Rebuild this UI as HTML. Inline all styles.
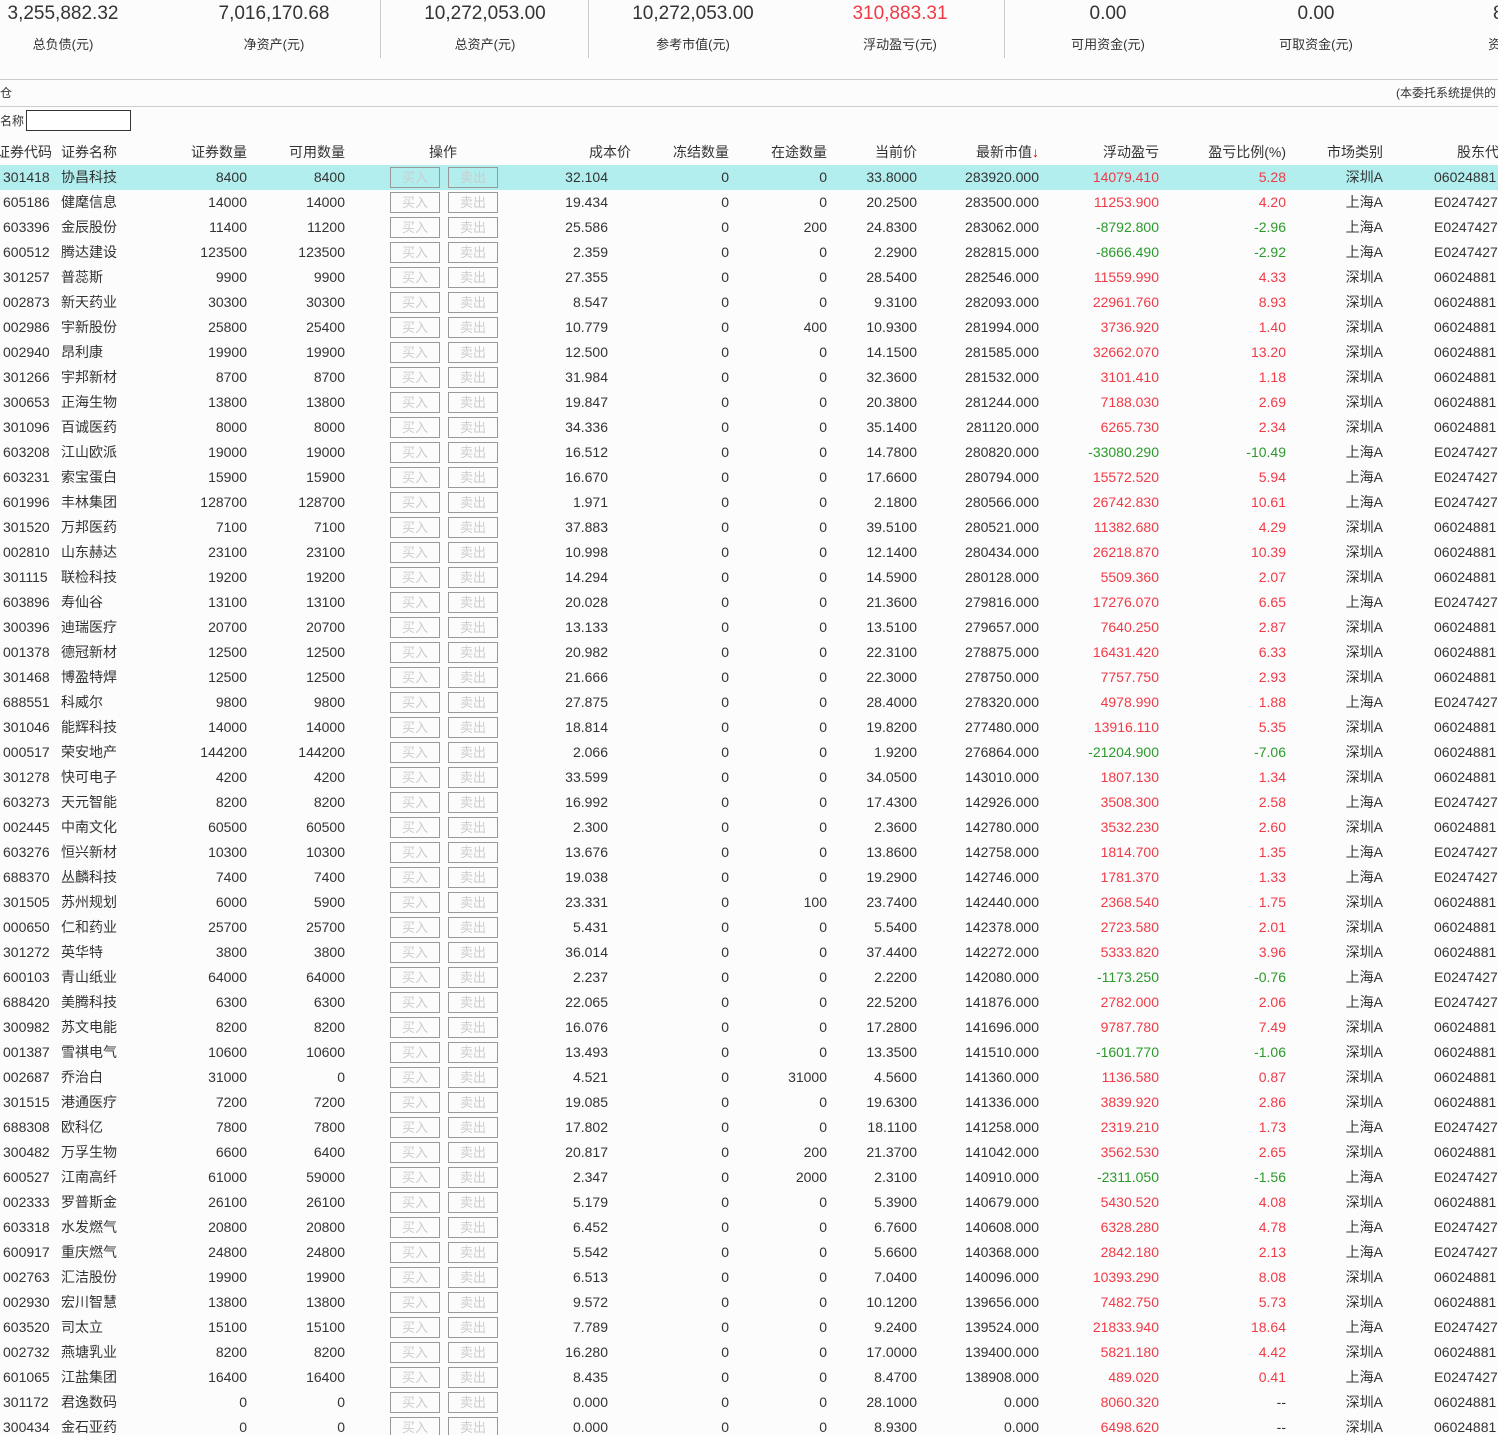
<!DOCTYPE html>
<html><head><meta charset="utf-8">
<style>
html,body{margin:0;padding:0;background:#fcfcfc;width:1498px;height:1435px;overflow:hidden;font-family:"Liberation Sans","Noto Sans CJK SC",sans-serif;color:#333;}
.top{position:absolute;left:0;top:0;width:1498px;height:80px;}
.st{position:absolute;top:0;width:200px;margin-left:-100px;text-align:center;}
.st .v{font-size:19px;line-height:28px;color:#333;}
.st .v.r{color:#f03a46;}
.st .l{font-size:13px;line-height:16px;margin-top:9px;color:#333;}
.dv{position:absolute;top:0;width:1px;height:58px;background:#ccc;}
.hl{position:absolute;left:0;width:1498px;height:1px;background:#ccc;}
.t1{position:absolute;left:0;top:84px;font-size:12px;}
.t2{position:absolute;right:2px;top:84px;font-size:12px;}
.nm{position:absolute;left:0;top:112px;font-size:12px;}
.inp{position:absolute;left:26px;top:110px;width:103px;height:19px;border:1px solid #333;background:#fff;}
.wrap{position:absolute;left:0;top:140px;width:1498px;height:1295px;overflow:hidden;}
table{width:1552px;border-collapse:collapse;table-layout:fixed;font-size:14px;}
td,th{padding:0 1px 0 0;height:25px;line-height:25px;text-align:right;white-space:nowrap;overflow:hidden;font-weight:normal;}
th{height:25px;font-size:14px;}
td:nth-child(1){text-align:left;padding-left:3px;}
th:nth-child(1){text-align:left;padding-left:0;text-indent:-4px;}
td:nth-child(2),th:nth-child(2){text-align:left;padding-left:3px;}
td:nth-child(5),th:nth-child(5){text-align:left;padding:0;}
td:nth-child(6){padding-right:24px;}
td:nth-child(14),th:nth-child(14){text-align:left;padding-left:50px;padding-right:0;}
th:nth-child(14){text-indent:23px;}
td span{display:inline-block;box-sizing:border-box;width:50px;height:21px;line-height:19px;border:1px solid #999;color:#ccc;text-align:center;font-size:13px;vertical-align:middle;margin-top:-2px;}
td span:first-child{margin-left:44px;margin-right:8px;}
tr.s td{background:#b2eeee;}
.r{color:#f03a46;}
.g{color:#2a9a2a;}
th .ar{color:#e00;}
</style></head><body>
<div class="top">
<div class="st" style="left:63px"><div class="v">3,255,882.32</div><div class="l">总负债(元)</div></div>
<div class="st" style="left:274px"><div class="v">7,016,170.68</div><div class="l">净资产(元)</div></div>
<div class="st" style="left:485px"><div class="v">10,272,053.00</div><div class="l">总资产(元)</div></div>
<div class="st" style="left:693px"><div class="v">10,272,053.00</div><div class="l">参考市值(元)</div></div>
<div class="st" style="left:900px"><div class="v r">310,883.31</div><div class="l">浮动盈亏(元)</div></div>
<div class="st" style="left:1108px"><div class="v">0.00</div><div class="l">可用资金(元)</div></div>
<div class="st" style="left:1316px"><div class="v">0.00</div><div class="l">可取资金(元)</div></div>
<div class="st" style="left:1530px"><div class="v">8,000.00</div></div>
<div class="st" style="left:1525px"><div class="v">&nbsp;</div><div class="l">资金余额(元)</div></div>
<div class="dv" style="left:380px"></div><div class="dv" style="left:588px"></div><div class="dv" style="left:1004px"></div>
</div>
<div class="hl" style="top:79px"></div>
<div class="t1">仓</div>
<div class="t2">(本委托系统提供的</div>
<div class="hl" style="top:106px"></div>
<div class="nm">名称</div><div class="inp"></div>
<div class="wrap">
<table>
<colgroup><col style="width:58px"><col style="width:92px"><col style="width:98px"><col style="width:98px"><col style="width:194px"><col style="width:92px"><col style="width:98px"><col style="width:98px"><col style="width:90px"><col style="width:122px"><col style="width:120px"><col style="width:127px"><col style="width:97px"><col style="width:168px"></colgroup>
<tr><th>证券代码</th><th>证券名称</th><th>证券数量</th><th>可用数量</th><th style="padding-left:0;text-align:left"><span style="margin-left:83px;display:inline-block">操作</span></th><th>成本价</th><th>冻结数量</th><th>在途数量</th><th>当前价</th><th>最新市值<span class="ar">↓</span></th><th>浮动盈亏</th><th>盈亏比例(%)</th><th>市场类别</th><th>股东代码</th></tr>
<tr class="s"><td>301418</td><td>协昌科技</td><td>8400</td><td>8400</td><td><span>买入</span><span>卖出</span></td><td>32.104</td><td>0</td><td>0</td><td>33.8000</td><td>283920.000</td><td class="r">14079.410</td><td class="r">5.28</td><td>深圳A</td><td>06024881</td></tr>
<tr><td>605186</td><td>健麾信息</td><td>14000</td><td>14000</td><td><span>买入</span><span>卖出</span></td><td>19.434</td><td>0</td><td>0</td><td>20.2500</td><td>283500.000</td><td class="r">11253.900</td><td class="r">4.20</td><td>上海A</td><td>E0247427</td></tr>
<tr><td>603396</td><td>金辰股份</td><td>11400</td><td>11200</td><td><span>买入</span><span>卖出</span></td><td>25.586</td><td>0</td><td>200</td><td>24.8300</td><td>283062.000</td><td class="g">-8792.800</td><td class="g">-2.96</td><td>上海A</td><td>E0247427</td></tr>
<tr><td>600512</td><td>腾达建设</td><td>123500</td><td>123500</td><td><span>买入</span><span>卖出</span></td><td>2.359</td><td>0</td><td>0</td><td>2.2900</td><td>282815.000</td><td class="g">-8666.490</td><td class="g">-2.92</td><td>上海A</td><td>E0247427</td></tr>
<tr><td>301257</td><td>普蕊斯</td><td>9900</td><td>9900</td><td><span>买入</span><span>卖出</span></td><td>27.355</td><td>0</td><td>0</td><td>28.5400</td><td>282546.000</td><td class="r">11559.990</td><td class="r">4.33</td><td>深圳A</td><td>06024881</td></tr>
<tr><td>002873</td><td>新天药业</td><td>30300</td><td>30300</td><td><span>买入</span><span>卖出</span></td><td>8.547</td><td>0</td><td>0</td><td>9.3100</td><td>282093.000</td><td class="r">22961.760</td><td class="r">8.93</td><td>深圳A</td><td>06024881</td></tr>
<tr><td>002986</td><td>宇新股份</td><td>25800</td><td>25400</td><td><span>买入</span><span>卖出</span></td><td>10.779</td><td>0</td><td>400</td><td>10.9300</td><td>281994.000</td><td class="r">3736.920</td><td class="r">1.40</td><td>深圳A</td><td>06024881</td></tr>
<tr><td>002940</td><td>昂利康</td><td>19900</td><td>19900</td><td><span>买入</span><span>卖出</span></td><td>12.500</td><td>0</td><td>0</td><td>14.1500</td><td>281585.000</td><td class="r">32662.070</td><td class="r">13.20</td><td>深圳A</td><td>06024881</td></tr>
<tr><td>301266</td><td>宇邦新材</td><td>8700</td><td>8700</td><td><span>买入</span><span>卖出</span></td><td>31.984</td><td>0</td><td>0</td><td>32.3600</td><td>281532.000</td><td class="r">3101.410</td><td class="r">1.18</td><td>深圳A</td><td>06024881</td></tr>
<tr><td>300653</td><td>正海生物</td><td>13800</td><td>13800</td><td><span>买入</span><span>卖出</span></td><td>19.847</td><td>0</td><td>0</td><td>20.3800</td><td>281244.000</td><td class="r">7188.030</td><td class="r">2.69</td><td>深圳A</td><td>06024881</td></tr>
<tr><td>301096</td><td>百诚医药</td><td>8000</td><td>8000</td><td><span>买入</span><span>卖出</span></td><td>34.336</td><td>0</td><td>0</td><td>35.1400</td><td>281120.000</td><td class="r">6265.730</td><td class="r">2.34</td><td>深圳A</td><td>06024881</td></tr>
<tr><td>603208</td><td>江山欧派</td><td>19000</td><td>19000</td><td><span>买入</span><span>卖出</span></td><td>16.512</td><td>0</td><td>0</td><td>14.7800</td><td>280820.000</td><td class="g">-33080.290</td><td class="g">-10.49</td><td>上海A</td><td>E0247427</td></tr>
<tr><td>603231</td><td>索宝蛋白</td><td>15900</td><td>15900</td><td><span>买入</span><span>卖出</span></td><td>16.670</td><td>0</td><td>0</td><td>17.6600</td><td>280794.000</td><td class="r">15572.520</td><td class="r">5.94</td><td>上海A</td><td>E0247427</td></tr>
<tr><td>601996</td><td>丰林集团</td><td>128700</td><td>128700</td><td><span>买入</span><span>卖出</span></td><td>1.971</td><td>0</td><td>0</td><td>2.1800</td><td>280566.000</td><td class="r">26742.830</td><td class="r">10.61</td><td>上海A</td><td>E0247427</td></tr>
<tr><td>301520</td><td>万邦医药</td><td>7100</td><td>7100</td><td><span>买入</span><span>卖出</span></td><td>37.883</td><td>0</td><td>0</td><td>39.5100</td><td>280521.000</td><td class="r">11382.680</td><td class="r">4.29</td><td>深圳A</td><td>06024881</td></tr>
<tr><td>002810</td><td>山东赫达</td><td>23100</td><td>23100</td><td><span>买入</span><span>卖出</span></td><td>10.998</td><td>0</td><td>0</td><td>12.1400</td><td>280434.000</td><td class="r">26218.870</td><td class="r">10.39</td><td>深圳A</td><td>06024881</td></tr>
<tr><td>301115</td><td>联检科技</td><td>19200</td><td>19200</td><td><span>买入</span><span>卖出</span></td><td>14.294</td><td>0</td><td>0</td><td>14.5900</td><td>280128.000</td><td class="r">5509.360</td><td class="r">2.07</td><td>深圳A</td><td>06024881</td></tr>
<tr><td>603896</td><td>寿仙谷</td><td>13100</td><td>13100</td><td><span>买入</span><span>卖出</span></td><td>20.028</td><td>0</td><td>0</td><td>21.3600</td><td>279816.000</td><td class="r">17276.070</td><td class="r">6.65</td><td>上海A</td><td>E0247427</td></tr>
<tr><td>300396</td><td>迪瑞医疗</td><td>20700</td><td>20700</td><td><span>买入</span><span>卖出</span></td><td>13.133</td><td>0</td><td>0</td><td>13.5100</td><td>279657.000</td><td class="r">7640.250</td><td class="r">2.87</td><td>深圳A</td><td>06024881</td></tr>
<tr><td>001378</td><td>德冠新材</td><td>12500</td><td>12500</td><td><span>买入</span><span>卖出</span></td><td>20.982</td><td>0</td><td>0</td><td>22.3100</td><td>278875.000</td><td class="r">16431.420</td><td class="r">6.33</td><td>深圳A</td><td>06024881</td></tr>
<tr><td>301468</td><td>博盈特焊</td><td>12500</td><td>12500</td><td><span>买入</span><span>卖出</span></td><td>21.666</td><td>0</td><td>0</td><td>22.3000</td><td>278750.000</td><td class="r">7757.750</td><td class="r">2.93</td><td>深圳A</td><td>06024881</td></tr>
<tr><td>688551</td><td>科威尔</td><td>9800</td><td>9800</td><td><span>买入</span><span>卖出</span></td><td>27.875</td><td>0</td><td>0</td><td>28.4000</td><td>278320.000</td><td class="r">4978.990</td><td class="r">1.88</td><td>上海A</td><td>E0247427</td></tr>
<tr><td>301046</td><td>能辉科技</td><td>14000</td><td>14000</td><td><span>买入</span><span>卖出</span></td><td>18.814</td><td>0</td><td>0</td><td>19.8200</td><td>277480.000</td><td class="r">13916.110</td><td class="r">5.35</td><td>深圳A</td><td>06024881</td></tr>
<tr><td>000517</td><td>荣安地产</td><td>144200</td><td>144200</td><td><span>买入</span><span>卖出</span></td><td>2.066</td><td>0</td><td>0</td><td>1.9200</td><td>276864.000</td><td class="g">-21204.900</td><td class="g">-7.06</td><td>深圳A</td><td>06024881</td></tr>
<tr><td>301278</td><td>快可电子</td><td>4200</td><td>4200</td><td><span>买入</span><span>卖出</span></td><td>33.599</td><td>0</td><td>0</td><td>34.0500</td><td>143010.000</td><td class="r">1807.130</td><td class="r">1.34</td><td>深圳A</td><td>06024881</td></tr>
<tr><td>603273</td><td>天元智能</td><td>8200</td><td>8200</td><td><span>买入</span><span>卖出</span></td><td>16.992</td><td>0</td><td>0</td><td>17.4300</td><td>142926.000</td><td class="r">3508.300</td><td class="r">2.58</td><td>上海A</td><td>E0247427</td></tr>
<tr><td>002445</td><td>中南文化</td><td>60500</td><td>60500</td><td><span>买入</span><span>卖出</span></td><td>2.300</td><td>0</td><td>0</td><td>2.3600</td><td>142780.000</td><td class="r">3532.230</td><td class="r">2.60</td><td>深圳A</td><td>06024881</td></tr>
<tr><td>603276</td><td>恒兴新材</td><td>10300</td><td>10300</td><td><span>买入</span><span>卖出</span></td><td>13.676</td><td>0</td><td>0</td><td>13.8600</td><td>142758.000</td><td class="r">1814.700</td><td class="r">1.35</td><td>上海A</td><td>E0247427</td></tr>
<tr><td>688370</td><td>丛麟科技</td><td>7400</td><td>7400</td><td><span>买入</span><span>卖出</span></td><td>19.038</td><td>0</td><td>0</td><td>19.2900</td><td>142746.000</td><td class="r">1781.370</td><td class="r">1.33</td><td>上海A</td><td>E0247427</td></tr>
<tr><td>301505</td><td>苏州规划</td><td>6000</td><td>5900</td><td><span>买入</span><span>卖出</span></td><td>23.331</td><td>0</td><td>100</td><td>23.7400</td><td>142440.000</td><td class="r">2368.540</td><td class="r">1.75</td><td>深圳A</td><td>06024881</td></tr>
<tr><td>000650</td><td>仁和药业</td><td>25700</td><td>25700</td><td><span>买入</span><span>卖出</span></td><td>5.431</td><td>0</td><td>0</td><td>5.5400</td><td>142378.000</td><td class="r">2723.580</td><td class="r">2.01</td><td>深圳A</td><td>06024881</td></tr>
<tr><td>301272</td><td>英华特</td><td>3800</td><td>3800</td><td><span>买入</span><span>卖出</span></td><td>36.014</td><td>0</td><td>0</td><td>37.4400</td><td>142272.000</td><td class="r">5333.820</td><td class="r">3.96</td><td>深圳A</td><td>06024881</td></tr>
<tr><td>600103</td><td>青山纸业</td><td>64000</td><td>64000</td><td><span>买入</span><span>卖出</span></td><td>2.237</td><td>0</td><td>0</td><td>2.2200</td><td>142080.000</td><td class="g">-1173.250</td><td class="g">-0.76</td><td>上海A</td><td>E0247427</td></tr>
<tr><td>688420</td><td>美腾科技</td><td>6300</td><td>6300</td><td><span>买入</span><span>卖出</span></td><td>22.065</td><td>0</td><td>0</td><td>22.5200</td><td>141876.000</td><td class="r">2782.000</td><td class="r">2.06</td><td>上海A</td><td>E0247427</td></tr>
<tr><td>300982</td><td>苏文电能</td><td>8200</td><td>8200</td><td><span>买入</span><span>卖出</span></td><td>16.076</td><td>0</td><td>0</td><td>17.2800</td><td>141696.000</td><td class="r">9787.780</td><td class="r">7.49</td><td>深圳A</td><td>06024881</td></tr>
<tr><td>001387</td><td>雪祺电气</td><td>10600</td><td>10600</td><td><span>买入</span><span>卖出</span></td><td>13.493</td><td>0</td><td>0</td><td>13.3500</td><td>141510.000</td><td class="g">-1601.770</td><td class="g">-1.06</td><td>深圳A</td><td>06024881</td></tr>
<tr><td>002687</td><td>乔治白</td><td>31000</td><td>0</td><td><span>买入</span><span>卖出</span></td><td>4.521</td><td>0</td><td>31000</td><td>4.5600</td><td>141360.000</td><td class="r">1136.580</td><td class="r">0.87</td><td>深圳A</td><td>06024881</td></tr>
<tr><td>301515</td><td>港通医疗</td><td>7200</td><td>7200</td><td><span>买入</span><span>卖出</span></td><td>19.085</td><td>0</td><td>0</td><td>19.6300</td><td>141336.000</td><td class="r">3839.920</td><td class="r">2.86</td><td>深圳A</td><td>06024881</td></tr>
<tr><td>688308</td><td>欧科亿</td><td>7800</td><td>7800</td><td><span>买入</span><span>卖出</span></td><td>17.802</td><td>0</td><td>0</td><td>18.1100</td><td>141258.000</td><td class="r">2319.210</td><td class="r">1.73</td><td>上海A</td><td>E0247427</td></tr>
<tr><td>300482</td><td>万孚生物</td><td>6600</td><td>6400</td><td><span>买入</span><span>卖出</span></td><td>20.817</td><td>0</td><td>200</td><td>21.3700</td><td>141042.000</td><td class="r">3562.530</td><td class="r">2.65</td><td>深圳A</td><td>06024881</td></tr>
<tr><td>600527</td><td>江南高纤</td><td>61000</td><td>59000</td><td><span>买入</span><span>卖出</span></td><td>2.347</td><td>0</td><td>2000</td><td>2.3100</td><td>140910.000</td><td class="g">-2311.050</td><td class="g">-1.56</td><td>上海A</td><td>E0247427</td></tr>
<tr><td>002333</td><td>罗普斯金</td><td>26100</td><td>26100</td><td><span>买入</span><span>卖出</span></td><td>5.179</td><td>0</td><td>0</td><td>5.3900</td><td>140679.000</td><td class="r">5430.520</td><td class="r">4.08</td><td>深圳A</td><td>06024881</td></tr>
<tr><td>603318</td><td>水发燃气</td><td>20800</td><td>20800</td><td><span>买入</span><span>卖出</span></td><td>6.452</td><td>0</td><td>0</td><td>6.7600</td><td>140608.000</td><td class="r">6328.280</td><td class="r">4.78</td><td>上海A</td><td>E0247427</td></tr>
<tr><td>600917</td><td>重庆燃气</td><td>24800</td><td>24800</td><td><span>买入</span><span>卖出</span></td><td>5.542</td><td>0</td><td>0</td><td>5.6600</td><td>140368.000</td><td class="r">2842.180</td><td class="r">2.13</td><td>上海A</td><td>E0247427</td></tr>
<tr><td>002763</td><td>汇洁股份</td><td>19900</td><td>19900</td><td><span>买入</span><span>卖出</span></td><td>6.513</td><td>0</td><td>0</td><td>7.0400</td><td>140096.000</td><td class="r">10393.290</td><td class="r">8.08</td><td>深圳A</td><td>06024881</td></tr>
<tr><td>002930</td><td>宏川智慧</td><td>13800</td><td>13800</td><td><span>买入</span><span>卖出</span></td><td>9.572</td><td>0</td><td>0</td><td>10.1200</td><td>139656.000</td><td class="r">7482.750</td><td class="r">5.73</td><td>深圳A</td><td>06024881</td></tr>
<tr><td>603520</td><td>司太立</td><td>15100</td><td>15100</td><td><span>买入</span><span>卖出</span></td><td>7.789</td><td>0</td><td>0</td><td>9.2400</td><td>139524.000</td><td class="r">21833.940</td><td class="r">18.64</td><td>上海A</td><td>E0247427</td></tr>
<tr><td>002732</td><td>燕塘乳业</td><td>8200</td><td>8200</td><td><span>买入</span><span>卖出</span></td><td>16.280</td><td>0</td><td>0</td><td>17.0000</td><td>139400.000</td><td class="r">5821.180</td><td class="r">4.42</td><td>深圳A</td><td>06024881</td></tr>
<tr><td>601065</td><td>江盐集团</td><td>16400</td><td>16400</td><td><span>买入</span><span>卖出</span></td><td>8.435</td><td>0</td><td>0</td><td>8.4700</td><td>138908.000</td><td class="r">489.020</td><td class="r">0.41</td><td>上海A</td><td>E0247427</td></tr>
<tr><td>301172</td><td>君逸数码</td><td>0</td><td>0</td><td><span>买入</span><span>卖出</span></td><td>0.000</td><td>0</td><td>0</td><td>28.1000</td><td>0.000</td><td class="r">8060.320</td><td>--</td><td>深圳A</td><td>06024881</td></tr>
<tr><td>300434</td><td>金石亚药</td><td>0</td><td>0</td><td><span>买入</span><span>卖出</span></td><td>0.000</td><td>0</td><td>0</td><td>8.9300</td><td>0.000</td><td class="r">6498.620</td><td>--</td><td>深圳A</td><td>06024881</td></tr>
</table>
</div>
</body></html>
